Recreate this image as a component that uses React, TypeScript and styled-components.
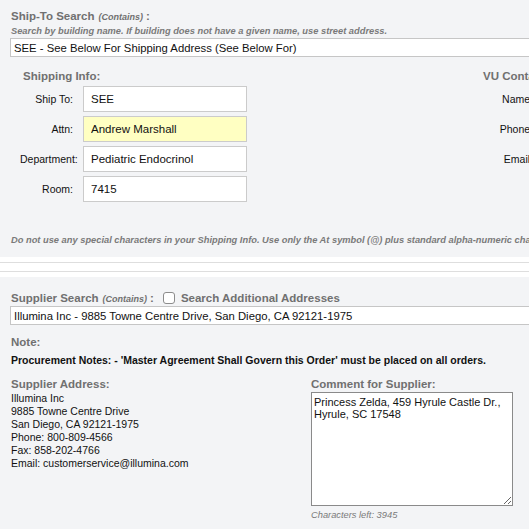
import React from "react";
import styled, { createGlobalStyle } from "styled-components";

const GlobalStyle = createGlobalStyle`
  html, body {
    margin: 0;
    padding: 0;
    background: #ffffff;
    overflow: hidden;
  }
  body {
    font-family: "Liberation Sans", Arial, sans-serif;
    color: #111;
  }
`;

const Page = styled.div`
  width: 529px;
  height: 529px;
  overflow: hidden;
`;

const Panel = styled.div<{ $top: number }>`
  background: #f3f4f6;
  padding: ${(p) => p.$top}px 0 0 11px;
  overflow: hidden;
`;

const Separator = styled.div`
  margin: 5px 0;
  height: 8px;
  border-top: 1px solid #dedede;
  border-bottom: 1px solid #dedede;
  background: #fff;
`;

const Heading = styled.div`
  font-size: 11.5px;
  font-weight: bold;
  color: #707070;
  line-height: 14px;
  white-space: nowrap;
  display: flex;
  align-items: center;
`;

const Contains = styled.span`
  font-size: 9px;
  font-style: italic;
  font-weight: bold;
  margin: 0 3px 0 4px;
  position: relative;
  top: 1px;
`;

const Hint = styled.div`
  font-size: 9.3px;
  font-style: italic;
  font-weight: bold;
  color: #7a7a7a;
  line-height: 12px;
  margin-top: 2px;
  white-space: nowrap;
`;

const WideInput = styled.input`
  display: block;
  box-sizing: border-box;
  width: 600px;
  height: 19px;
  margin: 1px 0 0 -1px;
  padding: 0 3px;
  border: 1px solid #c6c6c6;
  background: #fff;
  font-family: "Liberation Sans", Arial, sans-serif;
  font-size: 11.3px;
  color: #111;
  outline: none;
`;

const InfoRow = styled.div`
  display: flex;
  margin-top: 12px;
`;

const InfoBlock = styled.div<{ $width: number; $offset: number }>`
  width: ${(p) => p.$width}px;
  flex-shrink: 0;
  margin-left: ${(p) => p.$offset}px;
`;

const BlockTitle = styled.div`
  font-size: 11.5px;
  font-weight: bold;
  color: #707070;
  line-height: 14px;
  padding-left: 3px;
  white-space: nowrap;
`;

const Fields = styled.div`
  display: flex;
  flex-direction: column;
  gap: 4px;
  margin-top: 3px;
`;

const Field = styled.div`
  display: flex;
  align-items: center;
  height: 26px;
`;

const FieldLabel = styled.label`
  width: 53px;
  flex-shrink: 0;
  text-align: right;
  white-space: nowrap;
  font-size: 10.5px;
  color: #111;
  margin-right: 10px;
`;

const FieldInput = styled.input<{ $highlight?: boolean }>`
  box-sizing: border-box;
  width: 164px;
  height: 26px;
  padding: 0 7px;
  border: 1px solid #cbcbcb;
  background: ${(p) => (p.$highlight ? "#ffffc2" : "#fff")};
  font-family: "Liberation Sans", Arial, sans-serif;
  font-size: 11.5px;
  color: #111;
  outline: none;
`;

const Warning = styled(Hint)`
  margin-top: 32px;
  padding-bottom: 11px;
`;

const SearchRow = styled.div`
  display: flex;
  align-items: center;
  gap: 6px;
  margin-top: 1px;
`;

const Check = styled.input`
  appearance: none;
  width: 12px;
  height: 12px;
  margin: 0 0 0 3px;
  border: 1px solid #8c8c8c;
  border-radius: 3px;
  background: #fff;
  box-sizing: border-box;
`;

const NoteLabel = styled(Heading)`
  margin-top: 10px;
`;

const NoteText = styled.div`
  font-size: 10.5px;
  font-weight: bold;
  color: #111;
  line-height: 13px;
  margin-top: 5px;
  white-space: nowrap;
`;

const Columns = styled.div`
  display: grid;
  grid-template-columns: 300px 210px;
  margin-top: 10px;
  padding-bottom: 30px;
`;

const AddressLines = styled.div`
  font-size: 10.5px;
  line-height: 13px;
  color: #111;
  margin-top: 1px;
`;

const Comment = styled.textarea`
  display: block;
  box-sizing: border-box;
  width: 202px;
  height: 114px;
  margin: 1px 0 0 0;
  padding: 3px 2px;
  border: 1px solid #8a8a8a;
  background: #fff;
  font-family: "Liberation Sans", Arial, sans-serif;
  font-size: 11px;
  line-height: 12px;
  color: #111;
  resize: both;
  outline: none;
`;

const CharsLeft = styled.div`
  font-size: 9.3px;
  font-style: italic;
  color: #7a7a7a;
  margin-top: 4px;
`;

const shipFields = [
  { label: "Ship To:", value: "SEE" },
  { label: "Attn:", value: "Andrew Marshall", highlight: true },
  { label: "Department:", value: "Pediatric Endocrinol" },
  { label: "Room:", value: "7415" },
];

const addressLines = [
  "Illumina Inc",
  "9885 Towne Centre Drive",
  "San Diego, CA 92121-1975",
  "Phone: 800-809-4566",
  "Fax: 858-202-4766",
  "Email: customerservice@illumina.com",
];

export default function App() {
  return (
    <Page>
      <GlobalStyle />
      <Panel $top={9}>
        <Heading>
          Ship-To Search <Contains>(Contains)</Contains>:
        </Heading>
        <Hint>
          Search by building name. If building does not have a given name, use street address.
        </Hint>
        <WideInput readOnly value="SEE - See Below For Shipping Address (See Below For)" />
        <InfoRow>
          <InfoBlock $width={226} $offset={9}>
            <BlockTitle>Shipping Info:</BlockTitle>
            <Fields>
              {shipFields.map((f) => (
                <Field key={f.label}>
                  <FieldLabel>{f.label}</FieldLabel>
                  <FieldInput readOnly value={f.value} $highlight={f.highlight} />
                </Field>
              ))}
            </Fields>
          </InfoBlock>
          <InfoBlock $width={200} $offset={234}>
            <BlockTitle>VU Contact Info:</BlockTitle>
            <Fields>
              {["Name:", "Phone:", "Email:"].map((l) => (
                <Field key={l}>
                  <FieldLabel>{l}</FieldLabel>
                </Field>
              ))}
            </Fields>
          </InfoBlock>
        </InfoRow>
        <Warning>
          Do not use any special characters in your Shipping Info. Use only the At symbol (@) plus standard alpha-numeric characters.
        </Warning>
      </Panel>
      <Separator />
      <Panel $top={13}>
        <SearchRow>
          <Heading>
            Supplier Search <Contains>(Contains)</Contains>:
          </Heading>
          <Check type="checkbox" />
          <Heading>Search Additional Addresses</Heading>
        </SearchRow>
        <WideInput readOnly value="Illumina Inc - 9885 Towne Centre Drive, San Diego, CA 92121-1975" />
        <NoteLabel>Note:</NoteLabel>
        <NoteText>
          Procurement Notes: - 'Master Agreement Shall Govern this Order' must be placed on all orders.
        </NoteText>
        <Columns>
          <div>
            <Heading>Supplier Address:</Heading>
            <AddressLines>
              {addressLines.map((l) => (
                <div key={l}>{l}</div>
              ))}
            </AddressLines>
          </div>
          <div>
            <Heading>Comment for Supplier:</Heading>
            <Comment
              readOnly
              value={"Princess Zelda, 459 Hyrule Castle Dr.,\nHyrule, SC 17548"}
            />
            <CharsLeft>Characters left: 3945</CharsLeft>
          </div>
        </Columns>
      </Panel>
    </Page>
  );
}
